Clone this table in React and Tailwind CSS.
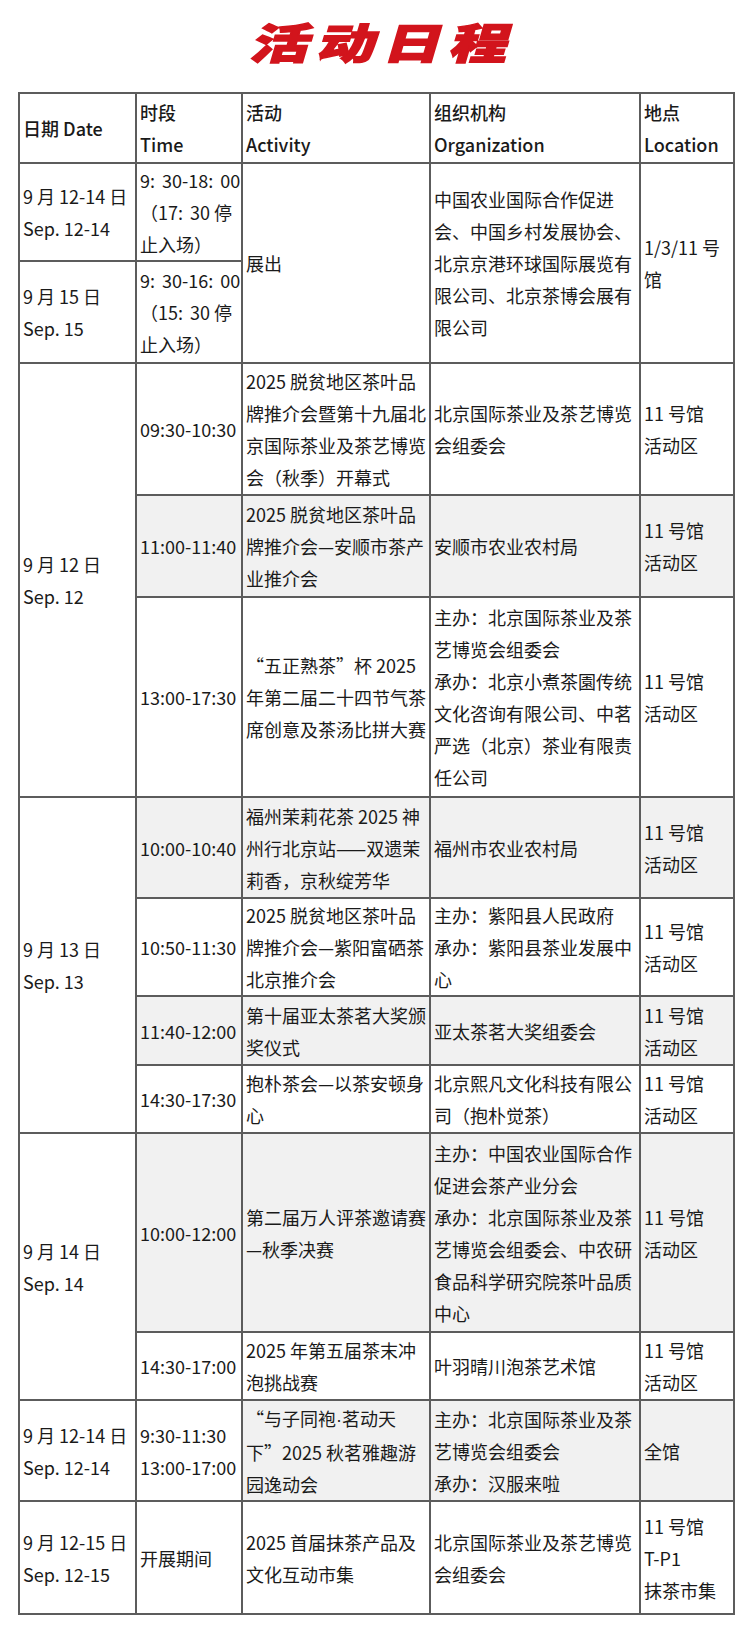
import React from "react";

const FONT = { fontFamily: '"Noto Sans CJK SC", "Noto Sans", sans-serif' };

// one cell: each entry in lines is its own line of text
function Cell({ lines, rowSpan, shade, head }) {
  return (
    <td
      rowSpan={rowSpan}
      className={`border-2 border-[#5c5c5c] align-middle pl-[3px] pr-0 py-0 leading-[32px] text-[18px] text-[#1a1a1a] ${
        shade ? "bg-[#f1f1f1]" : "bg-white"
      } ${head ? "font-medium" : "font-normal"}`}
    >
      {lines.map((l, i) => (
        <div key={i} className="whitespace-nowrap">
          {l}
        </div>
      ))}
    </td>
  );
}

// "9: 30" style time with the narrow colon gap used in the print
function T({ a, b }) {
  return (
    <>
      {a}:<span className="inline-block w-[7px]" />
      {b}
    </>
  );
}

const LOC = ["11 号馆", "活动区"];

export default function App() {
  return (
    <div className="w-[750px] min-h-[1632px] bg-white" style={FONT}>
      {/* Title */}
      <div className="h-[92px] pb-[10px] flex items-center justify-center">
        <h1 className="ml-[24px] text-[42px] leading-none font-black text-[#d2141c] tracking-[6px] scale-x-[1.38] -skew-x-12 [-webkit-text-stroke:1.5px_#d2141c]">
          活动日程
        </h1>
      </div>

      {/* Schedule table */}
      <table className="ml-[18px] w-[715px] table-fixed border-collapse">
        <colgroup>
          <col className="w-[117px]" />
          <col className="w-[106px]" />
          <col className="w-[188px]" />
          <col className="w-[210px]" />
          <col className="w-[94px]" />
        </colgroup>
        <tbody>
          <tr className="h-[70px]">
            <Cell head lines={["日期 Date"]} />
            <Cell head lines={["时段", "Time"]} />
            <Cell head lines={["活动", "Activity"]} />
            <Cell head lines={["组织机构", "Organization"]} />
            <Cell head lines={["地点", "Location"]} />
          </tr>

          {/* exhibition */}
          <tr className="h-[98px]">
            <Cell lines={["9 月 12-14 日", "Sep. 12-14"]} />
            <Cell
              lines={[
                <>
                  <T a="9" b="30-18" />
                  <T a="" b="00" />
                </>,
                <>
                  （17<T a="" b="30 停" />
                </>,
                "止入场）",
              ]}
            />
            <Cell rowSpan={2} lines={["展出"]} />
            <Cell
              rowSpan={2}
              lines={[
                "中国农业国际合作促进",
                "会、中国乡村发展协会、",
                "北京京港环球国际展览有",
                "限公司、北京茶博会展有",
                "限公司",
              ]}
            />
            <Cell rowSpan={2} lines={["1/3/11 号", "馆"]} />
          </tr>
          <tr className="h-[102px]">
            <Cell lines={["9 月 15 日", "Sep. 15"]} />
            <Cell
              lines={[
                <>
                  <T a="9" b="30-16" />
                  <T a="" b="00" />
                </>,
                <>
                  （15<T a="" b="30 停" />
                </>,
                "止入场）",
              ]}
            />
          </tr>

          {/* Sep 12 */}
          <tr className="h-[132px]">
            <Cell rowSpan={3} lines={["9 月 12 日", "Sep. 12"]} />
            <Cell lines={["09:30-10:30"]} />
            <Cell
              lines={[
                "2025 脱贫地区茶叶品",
                "牌推介会暨第十九届北",
                "京国际茶业及茶艺博览",
                "会（秋季）开幕式",
              ]}
            />
            <Cell lines={["北京国际茶业及茶艺博览", "会组委会"]} />
            <Cell lines={LOC} />
          </tr>
          <tr className="h-[102px]">
            <Cell shade lines={["11:00-11:40"]} />
            <Cell
              shade
              lines={["2025 脱贫地区茶叶品", "牌推介会—安顺市茶产", "业推介会"]}
            />
            <Cell shade lines={["安顺市农业农村局"]} />
            <Cell shade lines={LOC} />
          </tr>
          <tr className="h-[200px]">
            <Cell lines={["13:00-17:30"]} />
            <Cell
              lines={["“五正熟茶”杯 2025", "年第二届二十四节气茶", "席创意及茶汤比拼大赛"]}
            />
            <Cell
              lines={[
                "主办：北京国际茶业及茶",
                "艺博览会组委会",
                "承办：北京小煮茶園传统",
                "文化咨询有限公司、中茗",
                "严选（北京）茶业有限责",
                "任公司",
              ]}
            />
            <Cell lines={LOC} />
          </tr>

          {/* Sep 13 */}
          <tr className="h-[101px]">
            <Cell rowSpan={4} lines={["9 月 13 日", "Sep. 13"]} />
            <Cell shade lines={["10:00-10:40"]} />
            <Cell
              shade
              lines={["福州茉莉花茶 2025 神", "州行北京站——双遗茉", "莉香，京秋绽芳华"]}
            />
            <Cell shade lines={["福州市农业农村局"]} />
            <Cell shade lines={LOC} />
          </tr>
          <tr className="h-[98px]">
            <Cell lines={["10:50-11:30"]} />
            <Cell lines={["2025 脱贫地区茶叶品", "牌推介会—紫阳富硒茶", "北京推介会"]} />
            <Cell lines={["主办：紫阳县人民政府", "承办：紫阳县茶业发展中", "心"]} />
            <Cell lines={LOC} />
          </tr>
          <tr className="h-[69px]">
            <Cell shade lines={["11:40-12:00"]} />
            <Cell shade lines={["第十届亚太茶茗大奖颁", "奖仪式"]} />
            <Cell shade lines={["亚太茶茗大奖组委会"]} />
            <Cell shade lines={LOC} />
          </tr>
          <tr className="h-[68px]">
            <Cell lines={["14:30-17:30"]} />
            <Cell lines={["抱朴茶会—以茶安顿身", "心"]} />
            <Cell lines={["北京熙凡文化科技有限公", "司（抱朴觉茶）"]} />
            <Cell lines={LOC} />
          </tr>

          {/* Sep 14 */}
          <tr className="h-[199px]">
            <Cell rowSpan={2} lines={["9 月 14 日", "Sep. 14"]} />
            <Cell shade lines={["10:00-12:00"]} />
            <Cell shade lines={["第二届万人评茶邀请赛", "—秋季决赛"]} />
            <Cell
              shade
              lines={[
                "主办：中国农业国际合作",
                "促进会茶产业分会",
                "承办：北京国际茶业及茶",
                "艺博览会组委会、中农研",
                "食品科学研究院茶叶品质",
                "中心",
              ]}
            />
            <Cell shade lines={LOC} />
          </tr>
          <tr className="h-[68px]">
            <Cell lines={["14:30-17:00"]} />
            <Cell lines={["2025 年第五届茶末冲", "泡挑战赛"]} />
            <Cell lines={["叶羽晴川泡茶艺术馆"]} />
            <Cell lines={LOC} />
          </tr>

          {/* all days */}
          <tr className="h-[101px]">
            <Cell lines={["9 月 12-14 日", "Sep. 12-14"]} />
            <Cell lines={["9:30-11:30", "13:00-17:00"]} />
            <Cell
              shade
              lines={[
                <>
                  “与子同袍<span style={{ fontFamily: '"Liberation Sans", sans-serif' }}>·</span>茗动天
                </>,
                "下”2025 秋茗雅趣游",
                "园逸动会",
              ]}
            />
            <Cell
              shade
              lines={["主办：北京国际茶业及茶", "艺博览会组委会", "承办：汉服来啦"]}
            />
            <Cell shade lines={["全馆"]} />
          </tr>
          <tr className="h-[113px]">
            <Cell lines={["9 月 12-15 日", "Sep. 12-15"]} />
            <Cell lines={["开展期间"]} />
            <Cell lines={["2025 首届抹茶产品及", "文化互动市集"]} />
            <Cell lines={["北京国际茶业及茶艺博览", "会组委会"]} />
            <Cell lines={["11 号馆", "T-P1", "抹茶市集"]} />
          </tr>
        </tbody>
      </table>
    </div>
  );
}
